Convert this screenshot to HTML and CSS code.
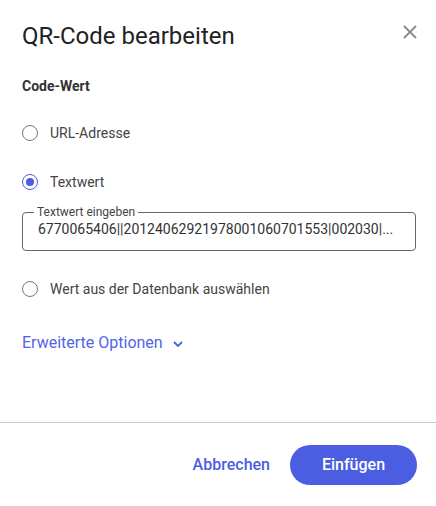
FILE: index.html
```html
<!DOCTYPE html>
<html lang="de">
<head>
    <meta charset="UTF-8">
    <title>QR-Code bearbeiten</title>
    <link rel="stylesheet" href="styles.css">
</head>
<body>
    <div class="dialog">
        <div class="content">
            <div class="header">
                <h2 class="title">QR-Code bearbeiten</h2>
                <button class="close" aria-label="Schließen">
                    <svg width="14" height="14" viewBox="0 0 14 14"><path d="M1 1L13 13M13 1L1 13" stroke="#8a8a8a" stroke-width="1.8" fill="none"/></svg>
                </button>
            </div>

            <div class="section-label">Code-Wert</div>

            <label class="radio"><span class="dot"></span>URL-Adresse</label>
            <label class="radio checked"><span class="dot"></span>Textwert</label>

            <fieldset class="field">
                <legend>Textwert eingeben</legend>
                <div class="value">6770065406||20124062921978001060701553|002030|...</div>
            </fieldset>

            <label class="radio"><span class="dot"></span>Wert aus der Datenbank auswählen</label>

            <a class="more" href="#">Erweiterte Optionen
                <svg width="10" height="6" viewBox="0 0 10 6"><path d="M1 1L5 5L9 1" stroke="#4b5de0" stroke-width="1.8" fill="none"/></svg>
            </a>
        </div>

        <div class="footer">
            <button class="btn-text">Abbrechen</button>
            <button class="btn-primary">Einfügen</button>
        </div>
    </div>
</body>
</html>
```

FILE: styles.css
```css
body {
    margin: 0;
    font-family: Roboto, "Noto Sans", Arial, sans-serif;
    background-color: #fff;
    color: #333;
}
.dialog {
    width: 436px;
    height: 506px;
    display: flex;
    flex-direction: column;
}
.content {
    flex: 1;
    padding: 0 20px 0 22px;
    display: flex;
    flex-direction: column;
    align-items: flex-start;
}
.header {
    align-self: stretch;
    display: flex;
    justify-content: space-between;
    align-items: flex-start;
    padding-top: 20px;
}
.title {
    margin: 0;
    font-size: 24px;
    font-weight: 400;
    line-height: 32px;
    color: #222;
}
.close {
    background: none;
    border: none;
    padding: 0;
    margin: 5px -1px 0 0;
    cursor: pointer;
    display: flex;
}
.section-label {
    margin-top: 24px;
    font-size: 14px;
    font-weight: 700;
    line-height: 20px;
    color: #333;
}
.radio {
    display: flex;
    align-items: center;
    gap: 12px;
    font-size: 14px;
    color: #444;
    line-height: 20px;
    margin-top: 27px;
    cursor: pointer;
}
.radio + .radio {
    margin-top: 29px;
}
.dot {
    width: 14px;
    height: 14px;
    border: 1.5px solid #777;
    border-radius: 50%;
    position: relative;
    box-sizing: content-box;
}
.checked .dot {
    border-color: #4b5de0;
}
.checked .dot::after {
    content: "";
    position: absolute;
    left: 3px;
    top: 3px;
    width: 8px;
    height: 8px;
    border-radius: 50%;
    background-color: #4b5de0;
}
.field {
    align-self: stretch;
    margin: 13px 0 0 0;
    padding: 0 14px 11px 15px;
    border: 1px solid #666;
    border-radius: 4px;
}
.field legend {
    padding: 0 3px;
    margin-left: -4px;
    font-size: 12px;
    line-height: 14px;
    color: #444;
}
.value {
    font-size: 14px;
    line-height: 20px;
    color: #333;
    white-space: nowrap;
    overflow: hidden;
    text-overflow: ellipsis;
}
.field + .radio {
    margin-top: 28px;
}
.more {
    margin-top: 34px;
    font-size: 16px;
    color: #5264e6;
    text-decoration: none;
    display: flex;
    align-items: center;
    gap: 10px;
}
.more svg {
    margin-top: 3px;
}
.footer {
    border-top: 1px solid #ccc;
    height: 83px;
    display: flex;
    justify-content: flex-end;
    align-items: center;
    gap: 20px;
    padding: 0 19px 0 0;
}
.btn-text {
    background: none;
    border: none;
    font-family: inherit;
    font-size: 16px;
    font-weight: 500;
    color: #4b5de0;
    cursor: pointer;
    padding: 0;
}
.btn-primary {
    width: 127px;
    height: 40px;
    border: none;
    border-radius: 20px;
    background-color: #4b5de0;
    color: #fff;
    font-family: inherit;
    font-size: 16px;
    font-weight: 500;
    cursor: pointer;
}
```
